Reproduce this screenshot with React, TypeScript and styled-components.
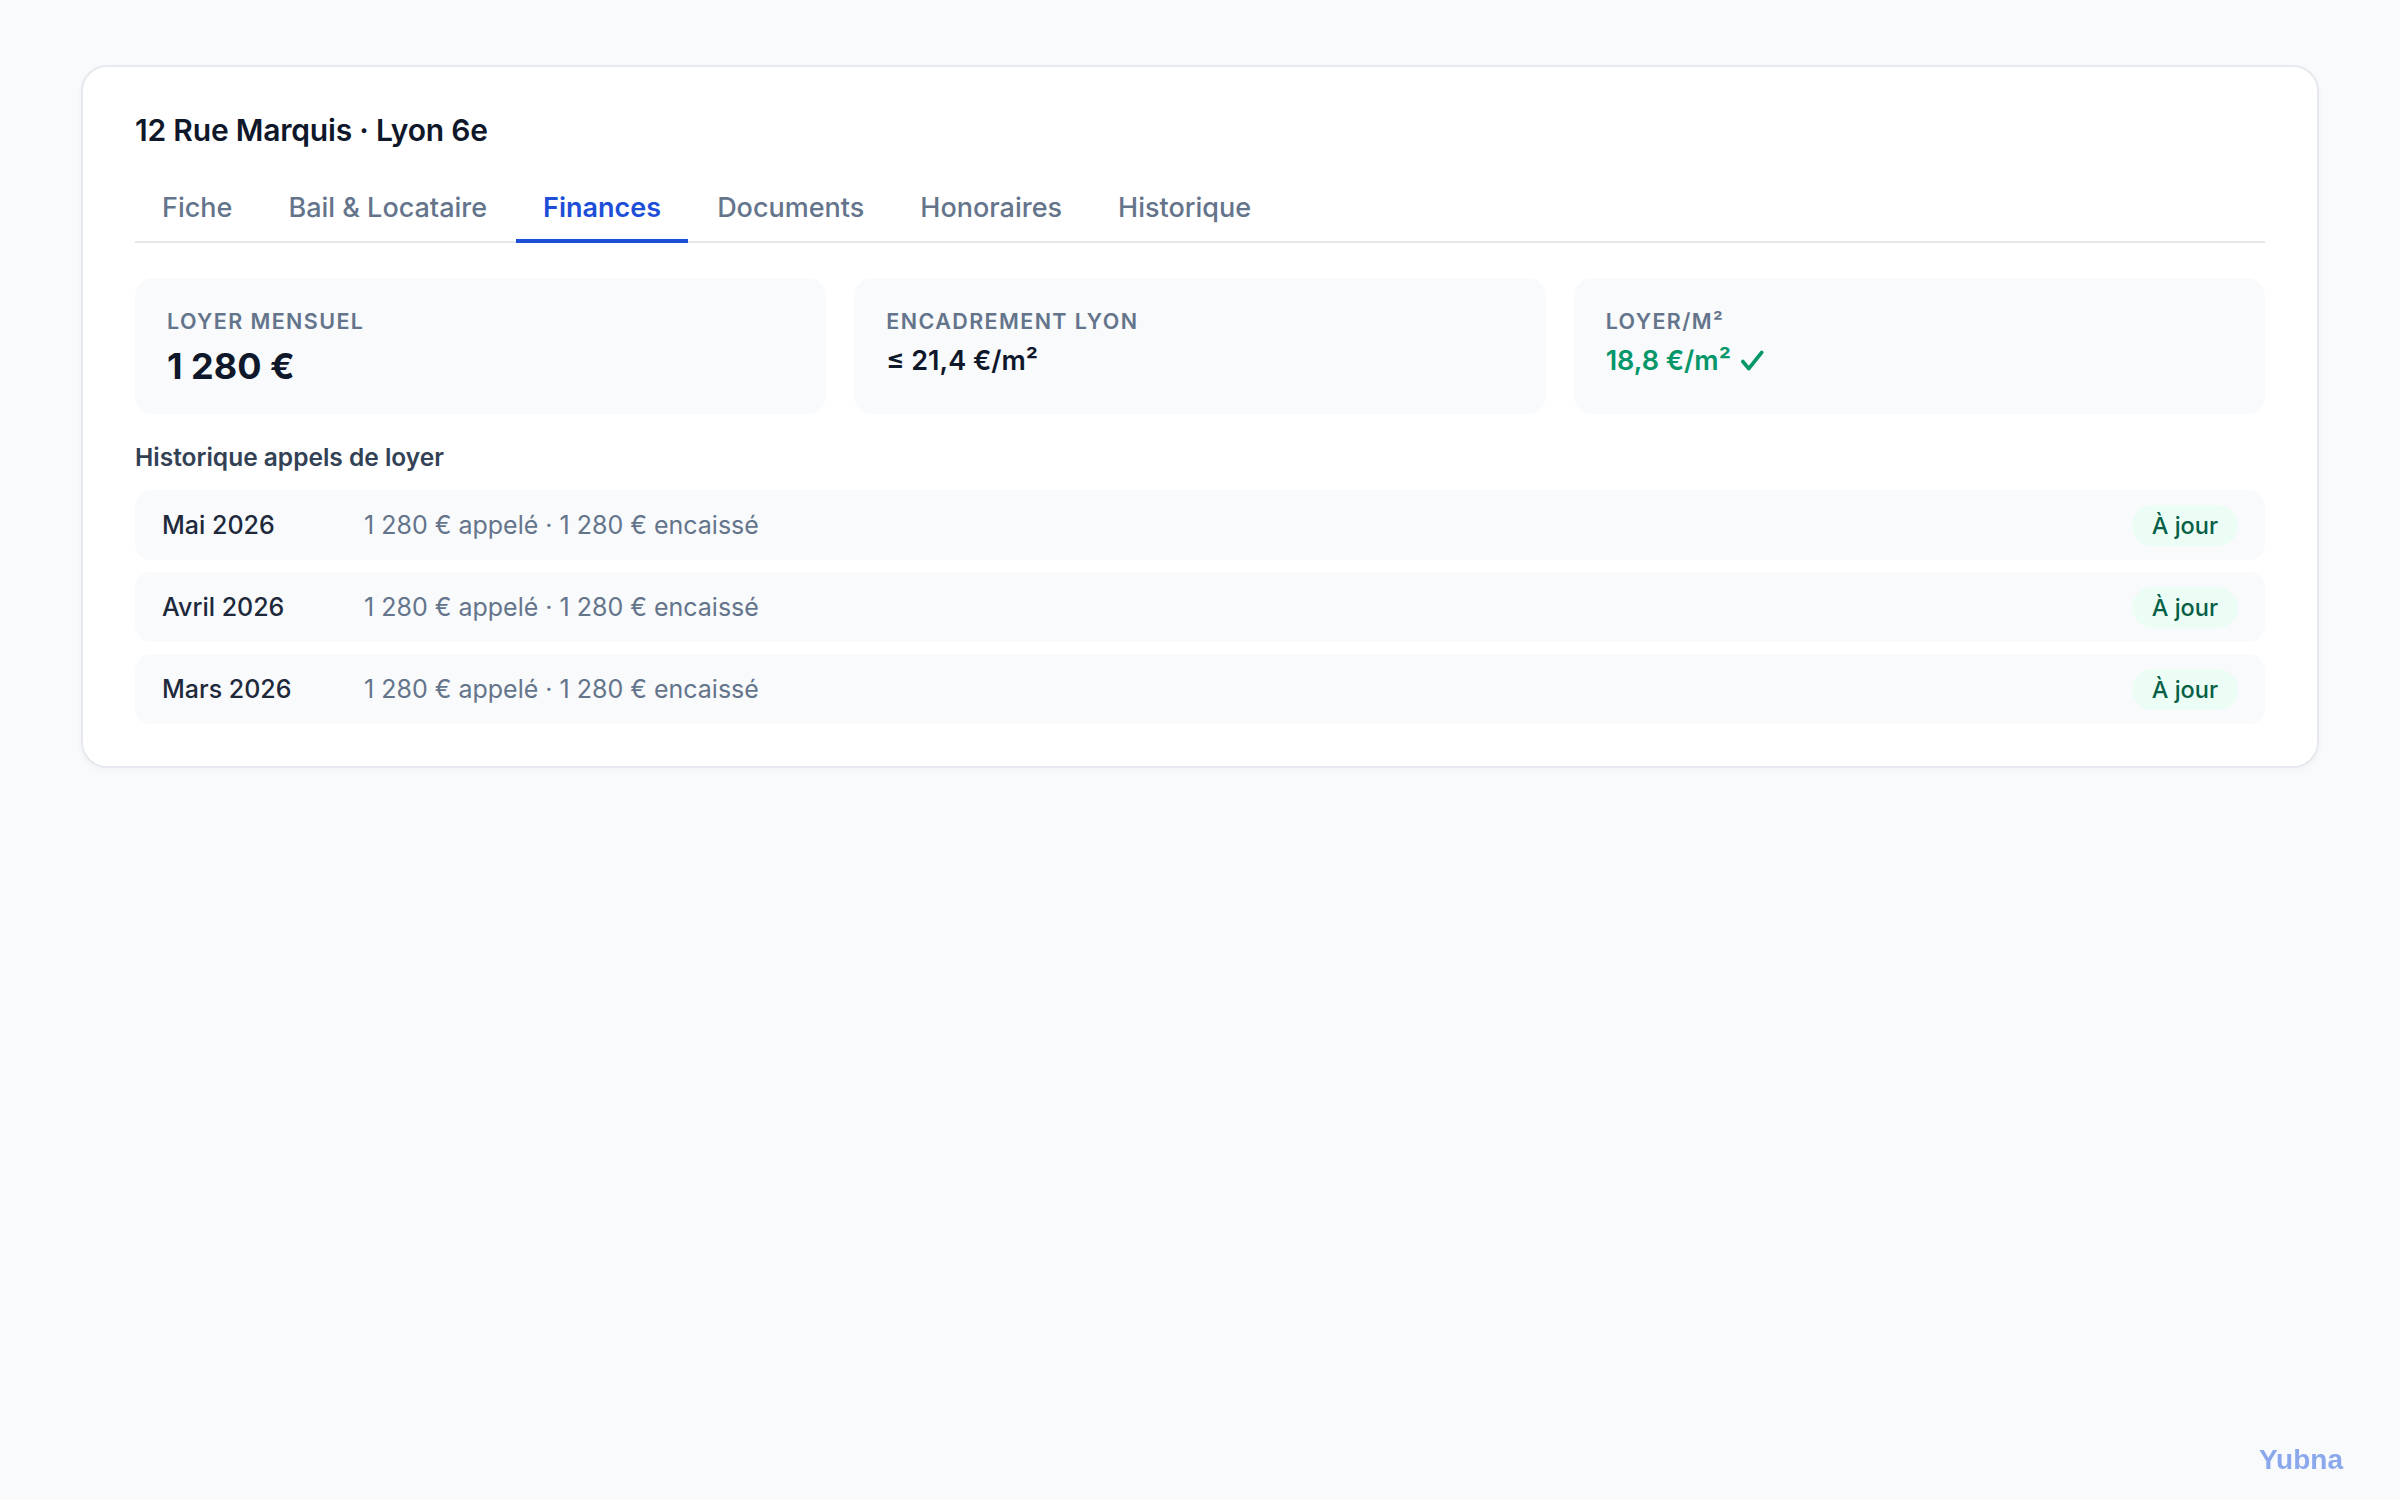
import React from "react";
import styled, { createGlobalStyle } from "styled-components";

const Global = createGlobalStyle`
  html, body { margin: 0; background: #f8fafc; font-family: Inter, "Noto Sans", sans-serif; }
  body { min-height: 1500px; }
`;

const Page = styled.div`
  padding: 65px 81px 0 81px;
`;

const Card = styled.div`
  background: #fff;
  border: 2px solid #e6e9ef;
  border-radius: 26px;
  padding: 45px 52px 42px 52px;
  box-shadow: 0 2px 6px rgba(15, 23, 42, 0.04);
`;

const Title = styled.h1`
  margin: 0 0 37px 0;
  font-size: 30px;
  font-weight: 600;
  color: #0f172a;
  letter-spacing: -0.2px;
`;

const Tabs = styled.div`
  display: flex;
  gap: 2px;
  border-bottom: 2px solid #e5e7eb;
  margin-bottom: 35px;
`;

const Tab = styled.div<{ $active?: boolean }>`
  padding: 6px 27px 15px;
  font-size: 27px;
  font-weight: ${(p) => (p.$active ? 600 : 500)};
  color: ${(p) => (p.$active ? "#1d4ed8" : "#64748b")};
  border-bottom: 4px solid ${(p) => (p.$active ? "#1d4ed8" : "transparent")};
  margin-bottom: -2px;
`;

const Stats = styled.div`
  display: grid;
  grid-template-columns: repeat(3, 1fr);
  gap: 28px;
  margin-bottom: 28px;
`;

const Stat = styled.div`
  background: #f8fafc;
  border-radius: 18px;
  padding: 30px 32px 26px;
  height: 136px;
  box-sizing: border-box;
`;

const StatLabel = styled.div`
  font-size: 21.5px;
  font-weight: 600;
  color: #64748b;
  text-transform: uppercase;
  letter-spacing: 1.4px;
  margin-bottom: 10px;
`;

const StatValue = styled.div<{ $big?: boolean; $green?: boolean }>`
  font-size: ${(p) => (p.$big ? "36px" : "27px")};
  font-weight: ${(p) => (p.$big ? 700 : 600)};
  color: ${(p) => (p.$green ? "#059669" : "#0f172a")};
  display: flex;
  align-items: center;
  gap: 8px;
`;

const Section = styled.div`
  font-size: 24.5px;
  font-weight: 600;
  color: #334155;
  margin-bottom: 18px;
`;

const Rows = styled.div`
  display: flex;
  flex-direction: column;
  gap: 12px;
`;

const Row = styled.div`
  display: flex;
  align-items: center;
  height: 70px;
  background: #f8fafc;
  border-radius: 16px;
  padding: 0 27px;
`;

const Month = styled.div`
  width: 202px;
  font-size: 25px;
  font-weight: 500;
  color: #1e293b;
`;

const Desc = styled.div`
  flex: 1;
  font-size: 25px;
  color: #64748b;
`;

const Badge = styled.div`
  background: #ecfdf5;
  color: #065f46;
  font-size: 23.5px;
  font-weight: 500;
  padding: 6px 20px;
  border-radius: 999px;
`;

const Brand = styled.div`
  position: fixed;
  right: 57px;
  bottom: 24px;
  font-size: 28px;
  font-weight: 700;
  color: #8ba8ec;
  font-family: "Liberation Sans", Arial, sans-serif;
`;

const rows = ["Mai 2026", "Avril 2026", "Mars 2026"];
const tabs = ["Fiche", "Bail & Locataire", "Finances", "Documents", "Honoraires", "Historique"];

export default function App() {
  return (
    <>
      <Global />
      <Page>
        <Card>
          <Title>12 Rue Marquis · Lyon 6e</Title>
          <Tabs>
            {tabs.map((t) => (
              <Tab key={t} $active={t === "Finances"}>{t}</Tab>
            ))}
          </Tabs>
          <Stats>
            <Stat>
              <StatLabel>Loyer mensuel</StatLabel>
              <StatValue $big>1 280 €</StatValue>
            </Stat>
            <Stat>
              <StatLabel>Encadrement Lyon</StatLabel>
              <StatValue>≤ 21,4 €/m²</StatValue>
            </Stat>
            <Stat>
              <StatLabel>Loyer/m²</StatLabel>
              <StatValue $green>
                18,8 €/m²
                <svg width="26" height="26" viewBox="0 0 24 24" fill="none" stroke="#059669" strokeWidth="3.4" strokeLinecap="round" strokeLinejoin="round">
                  <path d="M3.5 12.5l5.5 6.5L21 4" />
                </svg>
              </StatValue>
            </Stat>
          </Stats>
          <Section>Historique appels de loyer</Section>
          <Rows>
            {rows.map((m) => (
              <Row key={m}>
                <Month>{m}</Month>
                <Desc>1 280 € appelé · 1 280 € encaissé</Desc>
                <Badge>À jour</Badge>
              </Row>
            ))}
          </Rows>
        </Card>
      </Page>
      <Brand>Yubna</Brand>
    </>
  );
}
